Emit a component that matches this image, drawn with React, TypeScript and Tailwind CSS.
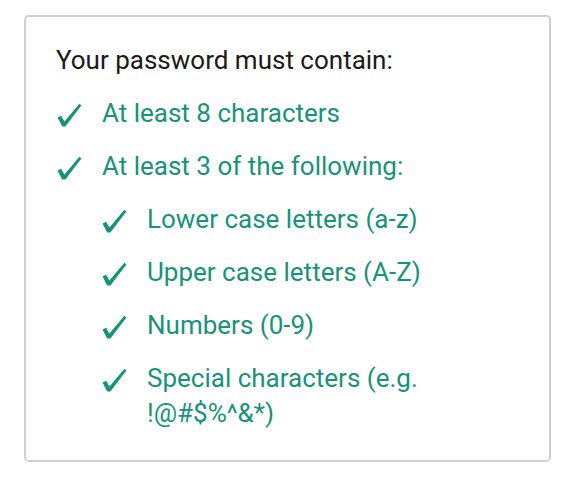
import React from "react";

const Check = () => (
  <span className="w-[46px] shrink-0 h-[35px] flex items-center">
    <svg width="26" height="25" viewBox="0 0 26 25" className="mt-[3px] text-[#17937a]" fill="currentColor">
      <path d="M1.5 14.5 L5.2 12.8 L8.4 18.4 L23.4 0.8 L25.4 2.4 L9.4 23.4 L6.2 23.6 Z" />
    </svg>
  </span>
);

const Item = ({ children }: { children: React.ReactNode }) => (
  <li className="flex items-start">
    <Check />
    <span className="leading-[35px]">{children}</span>
  </li>
);

export default function App() {
  return (
    <div className="w-[574px] h-[482px] bg-white pt-[15px] pl-[24px] [font-family:Roboto,sans-serif]">
      <div className="w-[527px] h-[447px] border-2 border-[#cfcfcf] rounded-[5px] pl-[30px] pt-[26px] pr-[20px]">
        <p className="text-[26px] leading-[35px] text-[#1a1a1a]">Your password must contain:</p>
        <ul className="mt-[18px] flex flex-col gap-[18px] text-[26px] text-[#17937a]">
          <Item>At least 8 characters</Item>
          <Item>At least 3 of the following:</Item>
        </ul>
        <ul className="mt-[18px] pl-[45px] flex flex-col gap-[18px] text-[26px] text-[#17937a]">
          <Item>Lower case letters (a-z)</Item>
          <Item>Upper case letters (A-Z)</Item>
          <Item>Numbers (0-9)</Item>
          <Item>Special characters (e.g. !@#$%^&amp;*)</Item>
        </ul>
      </div>
    </div>
  );
}
